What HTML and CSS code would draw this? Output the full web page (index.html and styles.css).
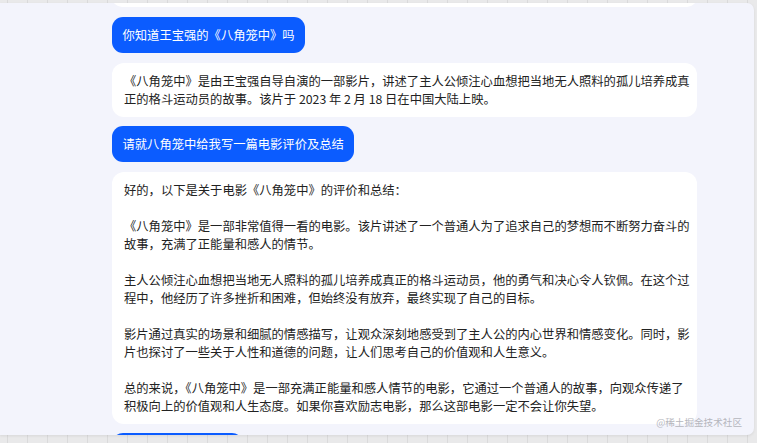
FILE: index.html
```html
<!DOCTYPE html>
<html lang="zh-CN">
<head>
<meta charset="utf-8">
<title>聊天</title>
<link rel="stylesheet" href="styles.css">
</head>
<body>
<div class="panel">
  <div class="chat">
    <div class="card stub"></div>
    <div class="bubble">你知道王宝强的《八角笼中》吗</div>
    <div class="card">
      <p>《八角笼中》是由王宝强自导自演的一部影片，讲述了主人公倾注心血想把当地无人照料的孤儿培养成真<br>正的格斗运动员的故事。该片于 2023 年 2 月 18 日在中国大陆上映。</p>
    </div>
    <div class="bubble">请就八角笼中给我写一篇电影评价及总结</div>
    <div class="card">
      <p>好的，以下是关于电影《八角笼中》的评价和总结：</p>
      <p>《八角笼中》是一部非常值得一看的电影。该片讲述了一个普通人为了追求自己的梦想而不断努力奋斗的<br>故事，充满了正能量和感人的情节。</p>
      <p>主人公倾注心血想把当地无人照料的孤儿培养成真正的格斗运动员，他的勇气和决心令人钦佩。在这个过<br>程中，他经历了许多挫折和困难，但始终没有放弃，最终实现了自己的目标。</p>
      <p>影片通过真实的场景和细腻的情感描写，让观众深刻地感受到了主人公的内心世界和情感变化。同时，影<br>片也探讨了一些关于人性和道德的问题，让人们思考自己的价值观和人生意义。</p>
      <p>总的来说，《八角笼中》是一部充满正能量和感人情节的电影，它通过一个普通人的故事，向观众传递了<br>积极向上的价值观和人生态度。如果你喜欢励志电影，那么这部电影一定不会让你失望。</p>
    </div>
    <div class="bubble next"></div>
  </div>
  <div class="watermark">@稀土掘金技术社区</div>
</div>
</body>
</html>
```

FILE: styles.css
```css
* { box-sizing: border-box; }
html, body { margin: 0; padding: 0; }
body {
  width: 757px;
  height: 443px;
  overflow: hidden;
  background-color: #e9e9ea;
  background-image: repeating-linear-gradient(90deg, transparent 0 7px, #dadadb 7px 8px, transparent 8px 20px);
  font-family: "Noto Sans CJK SC", "Noto Sans", sans-serif;
  padding-top: 3px;
}
.panel {
  position: relative;
  width: 754px;
  height: 432px;
  background: #f3f4fc;
  border-radius: 0 7px 7px 0;
  overflow: hidden;
  box-shadow: 0 1px 3px rgba(0,0,0,0.08);
}
.chat {
  display: flex;
  flex-direction: column;
  align-items: flex-start;
  gap: 9.5px;
  padding: 0 57px 0 112px;
}
.bubble {
  background: #0b5cff;
  color: #fff;
  font-size: 12.3px;
  line-height: 18px;
  padding: 9px 10.5px;
  border-radius: 11px;
  white-space: nowrap;
}
.bubble.next {
  width: 131px;
  height: 36px;
}
.card {
  align-self: stretch;
  background: #fff;
  border-radius: 12px;
  padding: 9px 0 9px 12px;
  color: #222;
  font-size: 12.3px;
  line-height: 18px;
  white-space: nowrap;
}
.card p { margin: 0 0 18px; }
.card p:last-child { margin-bottom: 0; }
.card.stub {
  height: 20px;
  margin-top: -16px;
  margin-bottom: 0.5px;
  padding: 0;
}
.watermark {
  position: absolute;
  right: 12px;
  bottom: 7px;
  font-size: 9.6px;
  line-height: 12px;
  color: #b5b6bd;
}
```
